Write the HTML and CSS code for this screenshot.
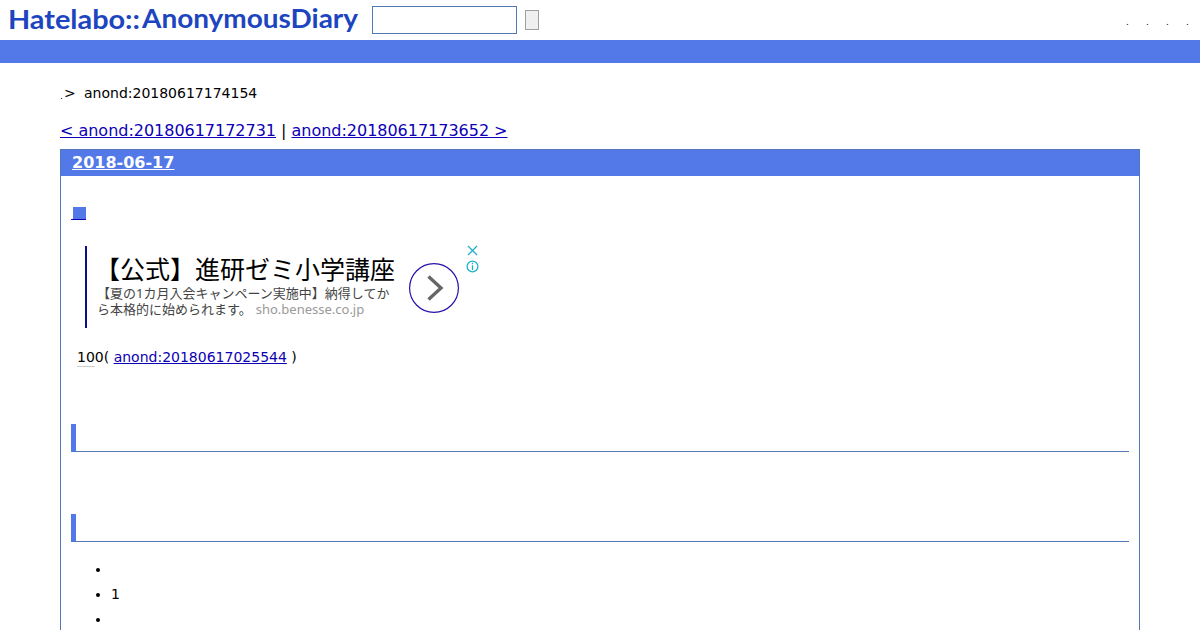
FILE: index.html
```html
<!DOCTYPE html>
<html lang="ja">
<head>
<meta charset="utf-8">
<title>anond:20180617174154</title>
<link rel="stylesheet" href="styles.css">
</head>
<body>
<header class="header">
  <svg class="logo" width="364" height="40" viewBox="0 0 364 40">
    <text x="8" y="29" textLength="132" lengthAdjust="spacingAndGlyphs">Hatelabo::</text>
    <text x="142" y="28" textLength="216" lengthAdjust="spacingAndGlyphs">AnonymousDiary</text>
  </svg>
  <input class="search" type="text">
  <button class="submit"></button>
  <ul class="tools"><li>.</li><li>.</li><li>.</li><li>.</li></ul>
</header>
<div class="bar"></div>
<main class="main">
  <div class="crumbs"><span class="tiny">.</span><span class="sep">&gt;</span><span>anond:20180617174154</span></div>
  <nav class="pager"><a href="#">&lt; anond:20180617172731</a> | <a href="#">anond:20180617173652 &gt;</a></nav>
  <article class="day">
    <h2 class="date"><a href="#">2018-06-17</a></h2>
    <div class="body">
      <h3 class="mark"><a href="#"><span class="square"></span></a></h3>
      <div class="ad">
        <div class="ad-text">
          <div class="ad-title">【公式】進研ゼミ小学講座</div>
          <div class="ad-desc">【夏の1カ月入会キャンペーン実施中】納得してか<br>ら本格的に始められます。<span class="ad-url">sho.benesse.co.jp</span></div>
        </div>
        <svg class="arrow" width="50" height="50" viewBox="0 0 50 50">
          <circle cx="25" cy="25" r="24.4"/>
          <path d="M19.5 13.5 32 25 19.5 36.5"/>
        </svg>
        <svg class="choices" width="13" height="30" viewBox="0 0 13 30">
          <path d="M2 2 11 11M11 2 2 11"/>
          <circle cx="6.5" cy="22.5" r="5.4"/>
          <path d="M6.5 21.3V26M6.5 18.8V20.3"/>
        </svg>
      </div>
      <p class="entry"><span class="kw">10</span>0( <a href="#">anond:20180617025544</a> )</p>
      <h4 class="section"></h4>
      <h4 class="section"></h4>
      <ul class="list"><li></li><li>1</li><li></li></ul>
    </div>
  </article>
</main>
</body>
</html>
```
FILE: styles.css
```css
* { box-sizing: border-box; }
body {
  margin: 0;
  height: 630px;
  overflow: hidden;
  background: #fff;
  color: #000;
  font-family: "DejaVu Sans", "Noto Sans CJK JP", sans-serif;
  font-size: 14px;
}
a { color: #0c00b4; }
.header { display: flex; height: 40px; }
.logo { flex: none; }
.logo text {
  font: bold 27px Lato, sans-serif;
  fill: #1c45bf;
}
.search {
  width: 145px;
  height: 28px;
  margin: 6px 8px 0;
  border: 1px solid #5279b5;
  background: #fff;
}
.submit {
  width: 14px;
  height: 20px;
  margin-top: 10px;
  padding: 0;
  border: 1px solid #a0a0a0;
  background: #efefef;
}
.tools {
  display: flex;
  gap: 18px;
  margin: 15px 12px 0 auto;
  padding: 0;
  list-style: none;
  font-size: 9px;
  line-height: 14px;
}
.tools li { width: 2px; }
.bar { height: 23px; background: #5279e7; }
.main { padding: 20px 60px 0; }
.crumbs { display: flex; height: 20px; line-height: 20px; }
.tiny { width: 4px; font-size: 9px; line-height: 26px; }
.sep { width: 20px; }
.pager {
  height: 24px;
  margin-top: 16px;
  font-size: 16px;
  line-height: 24px;
  letter-spacing: -0.02px;
}
.day {
  height: 500px;
  margin-top: 6px;
  border: 1px solid #5279b5;
}
.date {
  height: 26px;
  margin: 0;
  padding-left: 11px;
  background: #5279e7;
  font-size: 16px;
  line-height: 25px;
}
.date a { color: #fff; }
.body { padding: 30px 10px 0; }
.mark { height: 40px; margin: 0; line-height: 0; }
.mark a {
  display: block;
  width: 15px;
  height: 14px;
  padding: 1px 0 0 2px;
  border-bottom: 1px solid #0c00b4;
}
.square { display: block; width: 13px; height: 12px; background: #5279e7; }
.ad {
  display: flex;
  width: 408px;
  height: 82px;
  margin-left: 14px;
  border-left: 2px solid #0c0c8c;
}
.ad-text { width: 322px; padding: 7px 0 0 10px; white-space: nowrap; }
.ad-title {
  margin: 0 0 1px -2px;
  font: 25px/31px "Noto Sans CJK JP", sans-serif;
}
.ad-desc {
  color: #444;
  font: 13px/16px "Noto Sans", "Noto Sans CJK JP", sans-serif;
}
.ad-url { margin-left: 4px; color: #999; }
.arrow { margin-top: 17px; fill: none; stroke: #2510aa; stroke-width: 1.2; }
.arrow path { stroke: #666; stroke-width: 3.3; }
.choices { margin: -2px 0 0 7px; fill: none; stroke: #20b1c8; stroke-width: 1.3; }
.entry { height: 24px; margin: 17px 0 0 6px; line-height: 24px; }
.kw { display: inline-block; height: 22px; line-height: 24px; border-bottom: 1px solid #ccc; }
.section {
  height: 28px;
  margin: 55px 0 62px;
  border-left: 5px solid #5279e7;
  border-bottom: 1px solid #5279b5;
}
.section + .section { margin: 0 0 15px; }
.list { margin: 0; padding-left: 40px; }
.list li { height: 25px; line-height: 25px; }
```
